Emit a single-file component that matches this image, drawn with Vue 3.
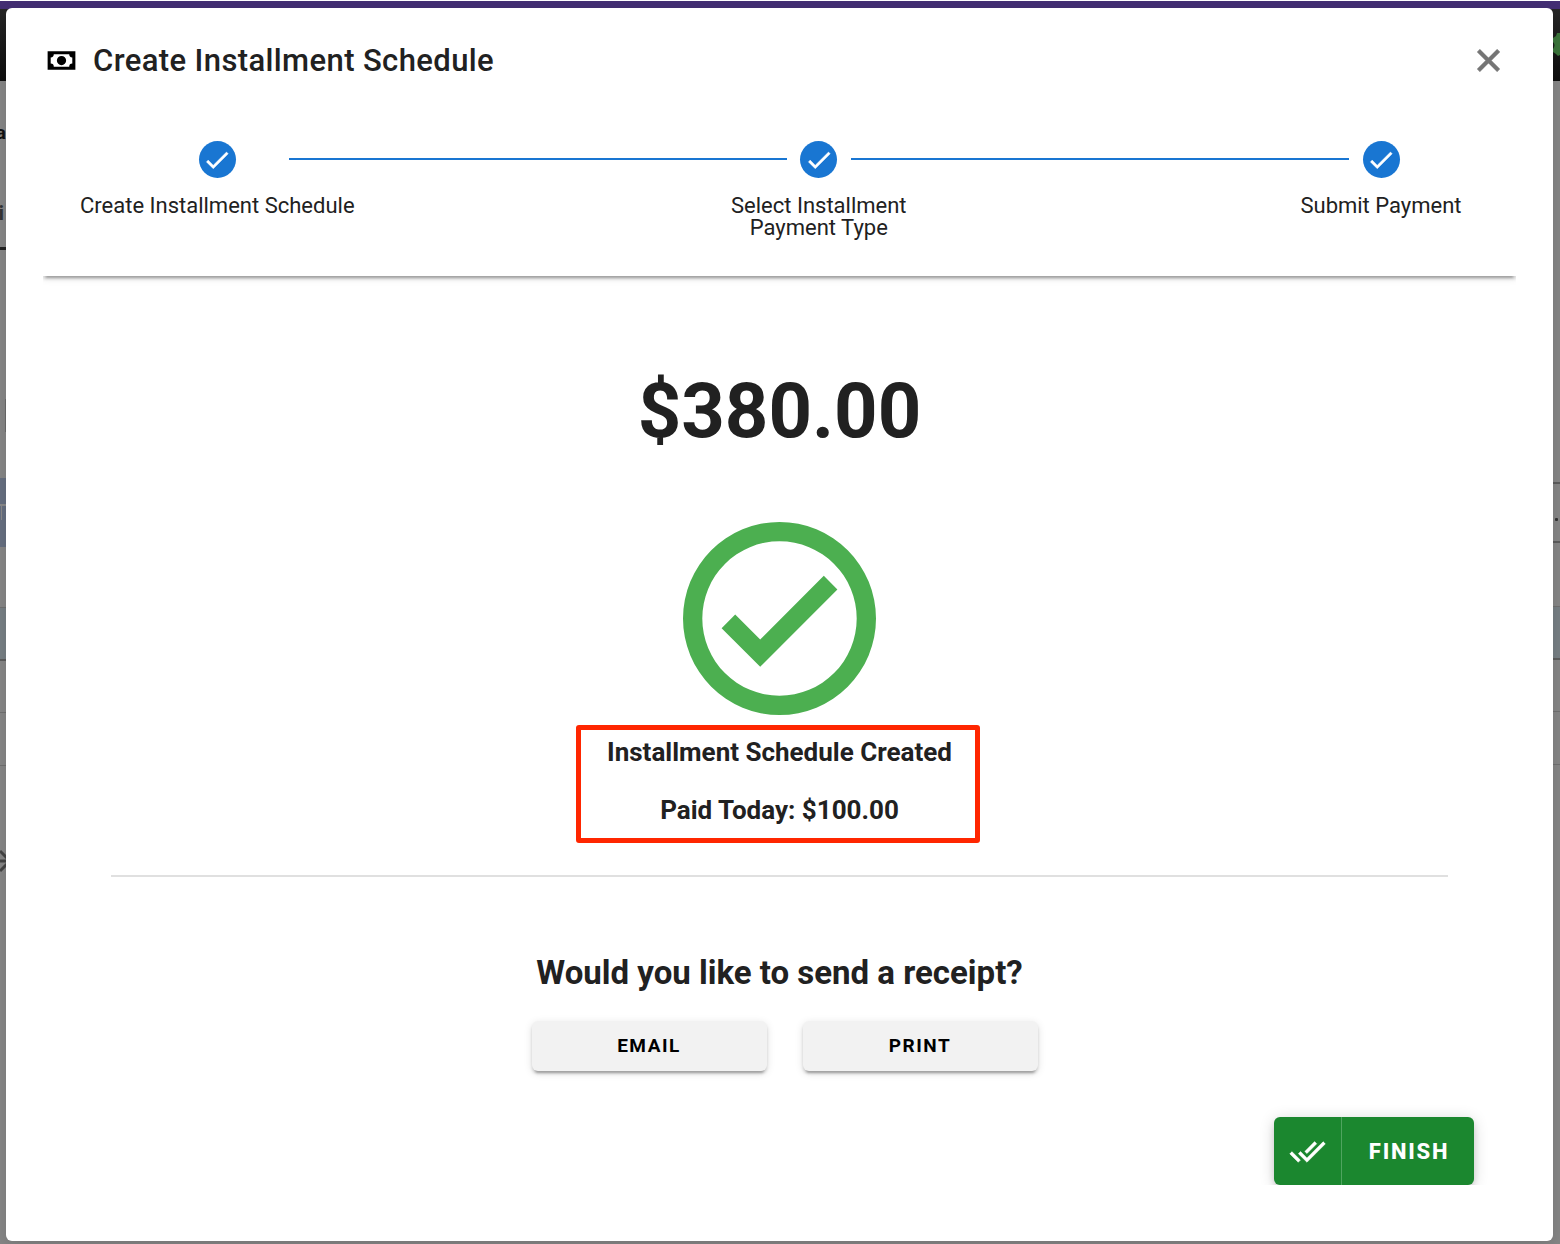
<script setup>
const icons = {
  cash: 'M3,6H21V18H3V6M12,9A3,3 0 0,1 15,12A3,3 0 0,1 12,15A3,3 0 0,1 9,12A3,3 0 0,1 12,9M7,8A2,2 0 0,1 5,10V14A2,2 0 0,1 7,16H17A2,2 0 0,1 19,14V10A2,2 0 0,1 17,8H7Z',
  close: 'M19,6.41L17.59,5L12,10.59L6.41,5L5,6.41L10.59,12L5,17.59L6.41,19L12,13.41L17.59,19L19,17.59L13.41,12L19,6.41Z',
  check: 'M21,7L9,19L3.5,13.5L4.91,12.09L9,16.17L19.59,5.59L21,7Z',
  checkCircle: 'M12,2A10,10 0 0,0 2,12A10,10 0 0,0 12,22A10,10 0 0,0 22,12A10,10 0 0,0 12,2M12,20A8,8 0 0,1 4,12A8,8 0 0,1 12,4A8,8 0 0,1 20,12A8,8 0 0,1 12,20M16.59,7.58L10,14.17L7.41,11.59L6,13L10,17L18,9L16.59,7.58Z',
  checkAll: 'M0.41,13.41L6,19L7.41,17.58L1.83,12M22.24,5.58L11.66,16.17L7.5,12L6.07,13.41L11.66,19L23.66,7M18,7L16.59,5.58L10.24,11.93L11.66,13.34L18,7Z',
}

const steps = ['Create Installment Schedule', 'Select Installment Payment Type', 'Submit Payment']

// Slivers of the dimmed page that stay visible on both sides of the dialog.
const leftEdge = [
  { h: 38 },
  { h: 28, kind: 'letter', text: 'a' },
  { h: 48 },
  { h: 34, kind: 'glyph', text: 'i' },
  { h: 18 },
  { h: 3, kind: 'rule-dark' },
  { h: 149 },
  { h: 33, kind: 'field' },
  { h: 46 },
  { h: 26, kind: 'selected' },
  { h: 2, kind: 'light' },
  { h: 41, kind: 'selected marked' },
  { h: 60 },
  { h: 1, kind: 'rule-faint' },
  { h: 51, kind: 'tinted' },
  { h: 2, kind: 'rule' },
  { h: 51 },
  { h: 1, kind: 'rule-faint' },
  { h: 52 },
  { h: 1, kind: 'rule-faint' },
  { h: 82 },
  { h: 26, kind: 'arrow' },
]
const rightEdge = [
  { h: 401 },
  { h: 2, kind: 'rule' },
  { h: 34 },
  { h: 3, kind: 'dot' },
  { h: 20 },
  { h: 2, kind: 'rule' },
  { h: 63 },
  { h: 1, kind: 'rule-faint' },
  { h: 51, kind: 'tinted' },
  { h: 2, kind: 'rule' },
  { h: 51 },
  { h: 1, kind: 'rule-faint' },
  { h: 52 },
  { h: 1, kind: 'rule-faint' },
]
</script>

<template>
  <div class="screen">
    <div class="backdrop" aria-hidden="true">
      <div class="brand-bar"></div>
      <div class="toolbar">
        <svg class="gear" viewBox="0 0 7 24"><path d="M7 0H4L3 3L0 5V9Q3 12 0 16V19L3 21L5 23L7 22Z" /></svg>
      </div>
      <div class="edges">
        <div class="edge">
          <div v-for="(row, i) in leftEdge" :key="i" class="row" :class="row.kind" :style="{ height: row.h + 'px' }">
            <svg v-if="row.kind === 'arrow'" viewBox="0 0 7 26" width="7" height="26"><path d="M0 3L7 10M0 13H7M0 23L7 16" /></svg>
            <template v-else>{{ row.text }}</template>
          </div>
        </div>
        <div class="edge">
          <div v-for="(row, i) in rightEdge" :key="i" class="row" :class="row.kind" :style="{ height: row.h + 'px' }"></div>
        </div>
      </div>
    </div>

    <main class="dialog" role="dialog" aria-labelledby="dialog-title">
      <header class="dialog-header">
        <svg class="icon cash" viewBox="0 0 24 24"><path :d="icons.cash" /></svg>
        <h1 id="dialog-title">Create Installment Schedule</h1>
        <button class="close" type="button" aria-label="Close">
          <svg class="icon" viewBox="0 0 24 24"><path :d="icons.close" /></svg>
        </button>
      </header>

      <div class="stepper-clip">
        <div class="stepper">
          <template v-for="(step, i) in steps" :key="step">
            <div v-if="i" class="connector"></div>
            <div class="step" :class="{ first: i === 0 }">
              <span class="badge"><svg viewBox="0 0 24 24"><path :d="icons.check" /></svg></span>
              <span class="step-label">{{ step }}</span>
            </div>
          </template>
        </div>
      </div>

      <section class="summary">
        <p class="amount">$380.00</p>
        <svg class="success" viewBox="2 2 20 20"><path :d="icons.checkCircle" /></svg>
        <div class="result">
          <p>Installment Schedule Created</p>
          <p>Paid Today: $100.00</p>
        </div>
      </section>

      <hr class="divider" />

      <section class="receipt">
        <h2>Would you like to send a receipt?</h2>
        <div class="choices">
          <button type="button">EMAIL</button>
          <button type="button">PRINT</button>
        </div>
      </section>

      <footer class="actions">
        <button class="finish" type="button">
          <span class="finish-icon"><svg class="icon" viewBox="0 0 24 24"><path :d="icons.checkAll" /></svg></span>
          <span class="finish-label">FINISH</span>
        </button>
      </footer>
    </main>
  </div>
</template>

<style>
body {
  margin: 0;
  background: #808080;
}
</style>

<style scoped>
* {
  box-sizing: border-box;
}
.screen {
  position: relative;
  min-height: 100vh;
  padding: 8px 7px 3px 6px;
  overflow: hidden;
  font-family: Roboto, sans-serif;
  color: #212121;
}
h1,
h2,
p {
  margin: 0;
}
button {
  border: 0;
  padding: 0;
  font: inherit;
  cursor: pointer;
}
svg {
  display: block;
  fill: currentColor;
}
.icon {
  width: 37px;
  height: 37px;
}

/* Dimmed page behind the dialog */
.backdrop {
  position: absolute;
  inset: 0;
  background: #868686;
}
.brand-bar {
  height: 9px;
  border-top: 1px solid #fff;
  background: #432e73;
}
.toolbar {
  display: flex;
  justify-content: flex-end;
  height: 72px;
  padding-top: 24px;
  background: linear-gradient(#262626, #0e0e0e);
}
.gear {
  width: 7px;
  height: 24px;
  color: #3b753b;
}
.edges {
  display: flex;
  justify-content: space-between;
}
.edge {
  width: 7px;
}
.letter {
  display: flex;
  justify-content: flex-end;
  width: 6px;
  font-size: 19px;
  line-height: 28px;
  font-weight: 700;
  color: #111;
}
.glyph {
  display: flex;
  justify-content: flex-end;
  width: 4px;
  font-size: 21px;
  line-height: 36px;
  font-weight: 700;
  color: #333;
}
.rule-dark {
  background: #222;
}
.rule {
  background: #5c5c5c;
}
.rule-faint {
  background: #707070;
}
.field {
  border-left: 5px solid #868686;
  background: #6a6a6a;
}
.selected {
  background: #666f80;
}
.marked {
  background: linear-gradient(#8a8a8a, #8a8a8a) 1px 0 / 1px 14px no-repeat #666f80;
}
.light {
  background: #8a8a8a;
}
.tinted {
  background: #777f84;
}
.dot {
  width: 3px;
  margin-left: 2px;
  border-radius: 1px;
  background: #333;
}
.arrow svg {
  fill: none;
  stroke: #444;
  stroke-width: 3px;
}

/* Dialog */
.dialog {
  position: relative;
  padding: 33px 37px 56px;
  border-radius: 6px;
  background: #fff;
  box-shadow: 0 6px 16px rgba(0, 0, 0, 0.12);
}
.dialog-header {
  display: flex;
  align-items: center;
  height: 38px;
}
.cash {
  color: #000;
}
h1 {
  flex: 1;
  margin-left: 13px;
  padding-top: 2px;
  font-size: 31px;
  line-height: 38px;
  font-weight: 500;
  letter-spacing: 0.0125em;
}
.close {
  margin-right: 9px;
  background: none;
  color: #757575;
}
.close path {
  stroke: currentColor;
  stroke-width: 0.7;
}

/* Stepper */
.stepper-clip {
  padding-bottom: 12px;
  overflow: hidden;
}
.stepper {
  display: flex;
  align-items: flex-start;
  height: 197px;
  background: #fff;
  box-shadow:
    0 5px 2px -3px rgba(0, 0, 0, 0.2),
    0 3px 3px rgba(0, 0, 0, 0.14),
    0 2px 8px rgba(0, 0, 0, 0.12);
}
.step {
  display: flex;
  flex: 0 0 270px;
  flex-direction: column;
  align-items: center;
  padding: 62px 37px 0;
}
.step.first {
  flex-basis: auto;
}
.badge {
  display: flex;
  align-items: center;
  justify-content: center;
  width: 37px;
  height: 37px;
  margin-bottom: 17px;
  border-radius: 50%;
  background: #1976d2;
  color: #fff;
}
.badge svg {
  width: 30px;
  height: 30px;
}
.badge path {
  stroke: currentColor;
  stroke-width: 0.3;
}
.step-label {
  font-size: 22px;
  line-height: 22px;
  text-align: center;
}
.connector {
  flex: 1;
  height: 2px;
  margin: 79px -103px 0;
  background: #1976d2;
}

/* Summary */
.summary {
  display: flex;
  flex-direction: column;
  align-items: center;
  padding-top: 77px;
}
.amount {
  font-size: 76px;
  line-height: 92px;
  font-weight: 700;
}
.success {
  width: 193px;
  height: 193px;
  margin-top: 65px;
  color: #4caf50;
}
.result {
  position: relative;
  display: flex;
  flex-direction: column;
  gap: 22px;
  width: 408px;
  height: 118px;
  margin-top: 10px;
  padding-top: 9px;
  font-size: 26px;
  line-height: 36px;
  font-weight: 700;
  text-align: center;
}
.result::after {
  content: '';
  position: absolute;
  inset: 0 4px 0 0;
  border: 5px solid #ff2600;
  border-radius: 3px;
}
.divider {
  height: 2px;
  margin: 32px 68px 0;
  border: 0;
  background: #e0e0e0;
}

/* Receipt */
.receipt {
  display: flex;
  flex-direction: column;
  align-items: center;
  gap: 28px;
  padding-top: 76px;
}
h2 {
  font-size: 33px;
  line-height: 40px;
  font-weight: 700;
}
.choices {
  display: flex;
  gap: 36px;
  padding-left: 10px;
}
.choices button {
  width: 235px;
  height: 50px;
  padding-bottom: 1px;
  border-radius: 6px;
  background: #f2f2f2;
  color: #000;
  font-size: 19px;
  font-weight: 700;
  letter-spacing: 0.08em;
  box-shadow:
    0 5px 2px -3px rgba(0, 0, 0, 0.2),
    0 3px 3px rgba(0, 0, 0, 0.14),
    0 2px 8px rgba(0, 0, 0, 0.12);
}
.actions {
  display: flex;
  justify-content: flex-end;
  padding: 46px 42px 0 0;
  overflow: hidden;
}
.finish {
  display: flex;
  width: 200px;
  height: 68px;
  border-radius: 6px;
  background: #1b872f;
  color: #fff;
  font-size: 22px;
  line-height: 70px;
  font-weight: 800;
  letter-spacing: 0.08em;
  box-shadow:
    0 5px 8px -2px rgba(0, 0, 0, 0.2),
    0 2px 15px rgba(0, 0, 0, 0.16);
}
.finish-icon {
  display: flex;
  align-items: center;
  justify-content: center;
  width: 68px;
  height: 68px;
  border-right: 1px solid #4fa45f;
}
.finish-icon path {
  stroke: currentColor;
  stroke-width: 0.3;
}
.finish-label {
  flex: 1;
  padding-left: 2px;
  text-align: center;
}
</style>
